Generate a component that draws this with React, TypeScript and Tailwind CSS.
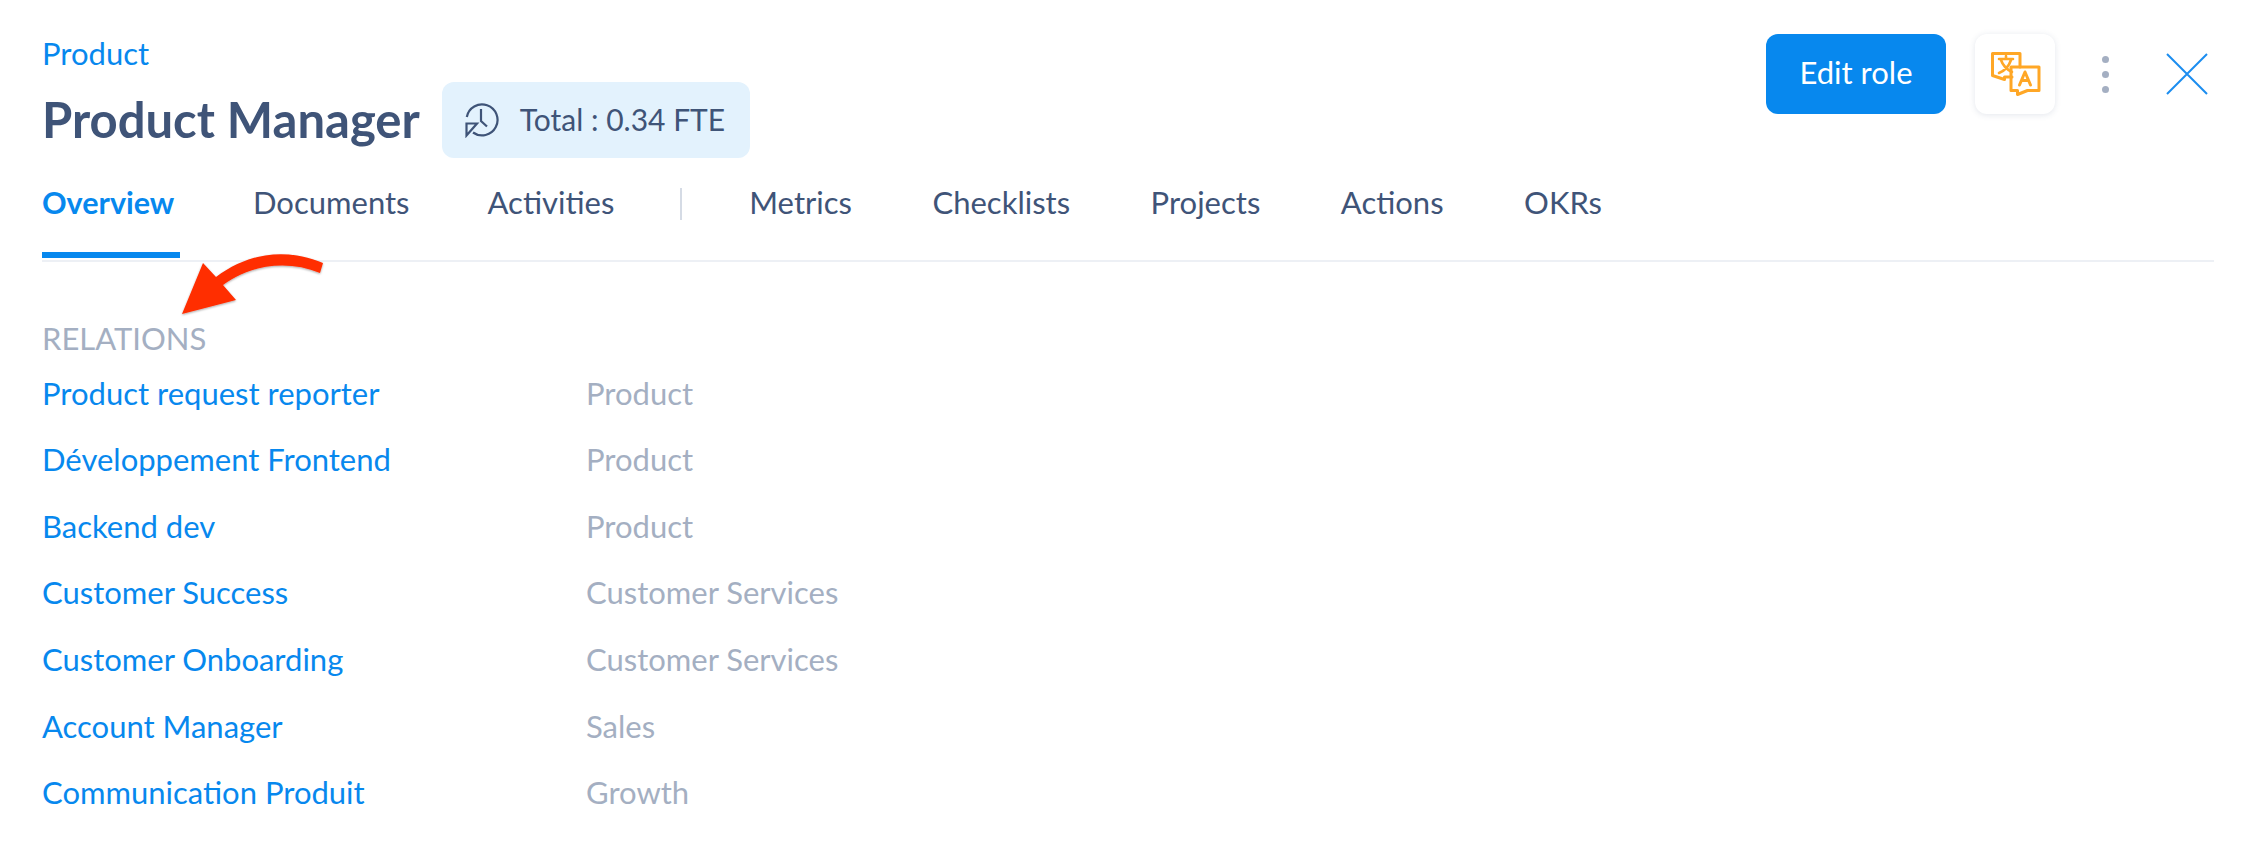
const tabs = ["Documents", "Activities"];
const moreTabs = ["Metrics", "Checklists", "Projects", "Actions", "OKRs"];

const relations = [
  ["Product request reporter", "Product"],
  ["Développement Frontend", "Product"],
  ["Backend dev", "Product"],
  ["Customer Success", "Customer Services"],
  ["Customer Onboarding", "Customer Services"],
  ["Account Manager", "Sales"],
  ["Communication Produit", "Growth"],
];

function HistoryIcon() {
  return (
    <svg width="36" height="36" viewBox="0 0 36 36" fill="none" stroke="#3f5478" strokeWidth="2.2">
      <path d="M1.8 15A15.5 15.5 0 1 1 8 30.5" />
      <path d="M16 7V19l6 5.5" />
      <path d="M12 21.5H1.5V33.5L12 21.5Z" strokeLinejoin="miter" />
    </svg>
  );
}

function TranslateIcon() {
  return (
    <svg className="ml-[2px]" width="50" height="44" viewBox="0 0 50 44" fill="none" stroke="#ffa726" strokeWidth="3" strokeLinejoin="round" strokeLinecap="round">
      <path d="M21 25H13.5V27.5L1.5 23.5V1.5H29V15" />
      <path d="M8 7H22M15 4V7M20 8C18 14 13 19 8 21M10 8C12 14 17 18 21 20" strokeWidth="2.6" />
      <path d="M20 15H48V38.5H36.5L26.5 42.5V38.5H20V15Z" />
      <path d="M28.5 33L34 20L39.5 33M30.5 28.5H37.5" />
    </svg>
  );
}

function RedArrow() {
  return (
    <svg className="pointer-events-none absolute left-[170px] top-[245px]" width="170" height="80" viewBox="170 245 170 80">
      <defs>
        <filter id="arrow-shadow" x="-10%" y="-10%" width="120%" height="130%">
          <feDropShadow dx="0" dy="1" stdDeviation="1" floodColor="#000" floodOpacity="0.35" />
        </filter>
      </defs>
      <path
        d="M182 314L203 263L216 277C248 252 288 248 323 263L320 273C288 260 252 264 223 285L236 300Z"
        fill="#ff2d00"
        filter="url(#arrow-shadow)"
      />
    </svg>
  );
}

export default function App() {
  return (
    <div className="relative h-[846px] w-full overflow-hidden bg-white pl-[42px] pr-[40px] font-['Lato',sans-serif]">
      <div className="flex items-start justify-between">
        <div>
          <a className="mt-[34px] block h-[38px] text-[31px] leading-[38px] text-[#0788ee]">Product</a>
          <div className="mt-[10px] flex h-[76px] items-center">
            <h1 className="text-[49px] font-bold text-[#3f5478]">Product Manager</h1>
            <div className="ml-[22px] flex h-[76px] w-[308px] items-center gap-[19px] rounded-[12px] bg-[#e3f2fd] pl-[23px] text-[30px] text-[#3f5478]">
              <HistoryIcon />
              <span className="pb-[2px]">Total : 0.34 FTE</span>
            </div>
          </div>
        </div>
        <div className="mt-[34px] flex items-center">
          <button className="h-[80px] w-[180px] rounded-[12px] bg-[#0788ee] pb-[3px] text-[31px] text-white">Edit role</button>
          <div className="ml-[29px] flex h-[80px] w-[80px] items-center justify-center rounded-[12px] bg-white shadow-[0_1px_6px_rgba(60,80,120,0.14)]">
            <TranslateIcon />
          </div>
          <div className="ml-[47px] flex flex-col gap-[8px]">
            <span className="h-[7px] w-[7px] rounded-full bg-[#a4afc2]" />
            <span className="h-[7px] w-[7px] rounded-full bg-[#a4afc2]" />
            <span className="h-[7px] w-[7px] rounded-full bg-[#a4afc2]" />
          </div>
          <svg className="ml-[57px] mr-[6px]" width="42" height="42" viewBox="0 0 42 42" stroke="#1b8df0" strokeWidth="2">
            <path d="M1 1L41 41M41 1L1 41" />
          </svg>
        </div>
      </div>

      <nav className="mt-[14px] flex h-[90px] items-start border-b-2 border-[#edf0f5] text-[31px] leading-[60px] text-[#3f5478]">
        <a className="h-[86px] w-[138px] border-b-[6px] border-[#0788ee] text-[30.5px] font-bold text-[#0788ee]">Overview</a>
        <div className="flex gap-[78px] pl-[73px]">
          {tabs.map((t) => (
            <a key={t}>{t}</a>
          ))}
        </div>
        <span className="ml-[66px] mt-[16px] h-[32px] w-[2px] bg-[#d5dbe5]" />
        <div className="flex gap-[80.5px] pl-[67px]">
          {moreTabs.map((t) => (
            <a key={t}>{t}</a>
          ))}
        </div>
      </nav>

      <section className="mt-[57px]">
        <h2 className="text-[31px] leading-[39px] text-[#a4afc2]">RELATIONS</h2>
        <div className="mt-[1.5px]">
          {relations.map(([name, team]) => (
            <div key={name} className="flex h-[66.6px] items-center text-[31px]">
              <a className="w-[544px] text-[#0788ee]">{name}</a>
              <span className="text-[#a4afc2]">{team}</span>
            </div>
          ))}
        </div>
      </section>

      <RedArrow />
    </div>
  );
}
